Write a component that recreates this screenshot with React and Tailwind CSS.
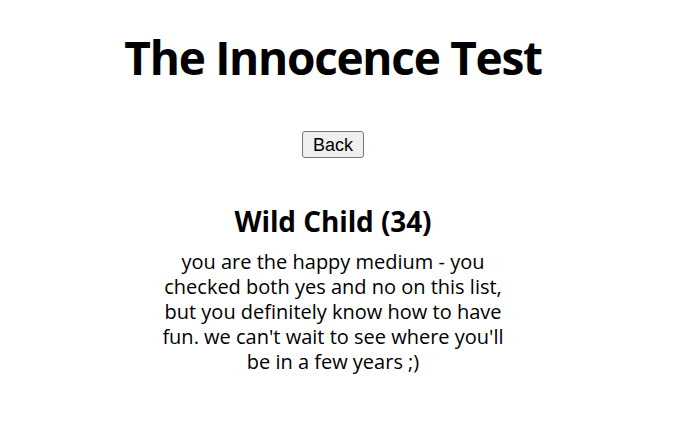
export default function App() {
  return (
    <div className="w-[666px] flex flex-col items-center bg-white text-black">
      <h1 className="mt-[25px] text-[46px] leading-[64px] font-bold font-['Open_Sans',sans-serif] tracking-[-1.3px]">The Innocence Test</h1>
      <button className="mt-[42px] h-[27px] px-[10px] border border-[#767676] rounded-[3px] bg-[#efefef] text-[18px] leading-[20px] font-['Liberation_Sans',Arial,sans-serif]">Back</button>
      <h2 className="mt-[43px] text-[28px] leading-[40px] font-bold font-['Open_Sans',sans-serif] tracking-[-0.1px]">Wild Child (34)</h2>
      <p className="mt-[8px] w-[350px] text-center text-[20px] leading-[25px] font-['Open_Sans',sans-serif]">
        you are the happy medium - you checked both yes and no on this list, but you definitely know how to have fun. we can't wait to see where you'll be in a few years ;)
      </p>
    </div>
  );
}
